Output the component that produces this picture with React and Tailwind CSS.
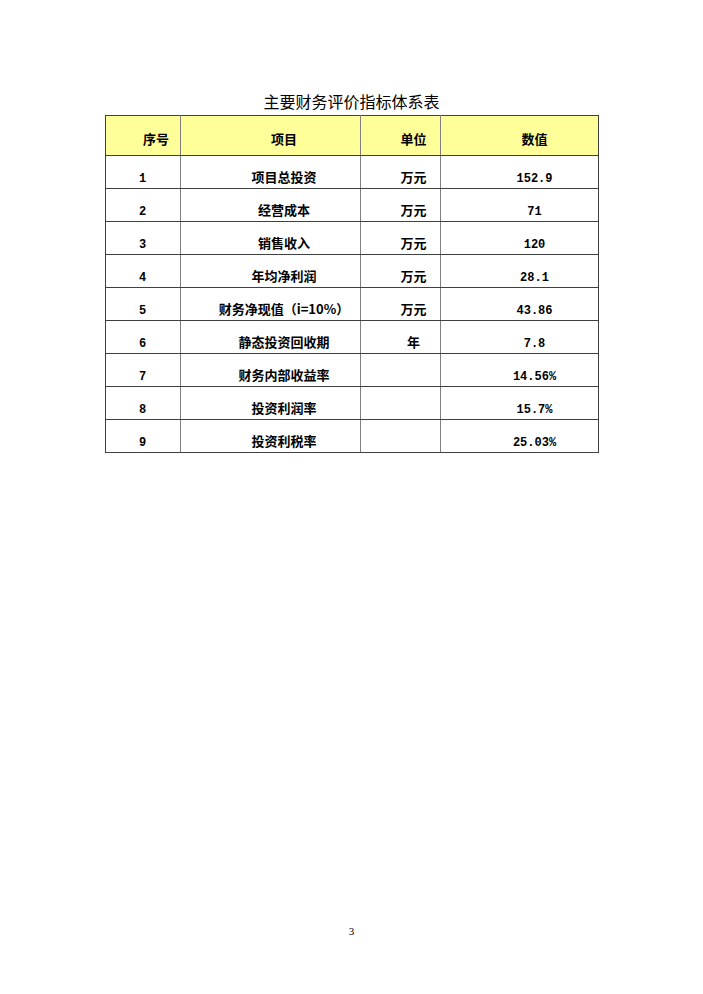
import React from 'react';

const rows = [
  { no: '1', name: '项目总投资', unit: '万元', value: '152.9' },
  { no: '2', name: '经营成本', unit: '万元', value: '71' },
  { no: '3', name: '销售收入', unit: '万元', value: '120' },
  { no: '4', name: '年均净利润', unit: '万元', value: '28.1' },
  { no: '5', name: '财务净现值（i=10%）', unit: '万元', value: '43.86' },
  { no: '6', name: '静态投资回收期', unit: '年', value: '7.8' },
  { no: '7', name: '财务内部收益率', unit: '', value: '14.56%' },
  { no: '8', name: '投资利润率', unit: '', value: '15.7%' },
  { no: '9', name: '投资利税率', unit: '', value: '25.03%' },
];

const cjk = { fontFamily: '"Noto Sans CJK SC", "Liberation Sans", sans-serif' };
const mono = { fontFamily: '"Liberation Mono", monospace' };

const App = () => {
  return (
    <div className="w-[703px] h-[994px] bg-white flex flex-col text-black" style={cjk}>
      <div className="pt-[91px] h-[20px] box-content text-center text-[16px] leading-[20px]">
        主要财务评价指标体系表
      </div>

      <div className="pl-[105px] mt-[4px]">
        <table className="table-fixed border-collapse w-[493px] font-bold text-[13px]">
          <colgroup>
            <col className="w-[75px]" />
            <col className="w-[180px]" />
            <col className="w-[80px]" />
            <col className="w-[158px]" />
          </colgroup>
          <thead>
            <tr className="bg-[#ffff99] h-[40px]">
              <th className="border border-[#404040] border-r-[#808080] pl-[37px] pt-[7px] text-left font-bold">序号</th>
              <th className="border border-[#404040] border-x-[#808080] pl-[27px] pt-[7px] text-center font-bold">项目</th>
              <th className="border border-[#404040] border-x-[#808080] pl-[26px] pt-[7px] text-center font-bold">单位</th>
              <th className="border border-[#404040] border-l-[#808080] pl-[30px] pt-[7px] text-center font-bold">数值</th>
            </tr>
          </thead>
          <tbody>
            {rows.map((row) => (
              <tr key={row.no} className="h-[33px]">
                <td className="border border-[#404040] border-r-[#808080] pl-[33px] pt-[10px] text-left">
                  <span style={mono} className="text-[12px]">{row.no}</span>
                </td>
                <td className="border border-[#404040] border-x-[#808080] pl-[27px] pt-[10px] text-center whitespace-nowrap">
                  {row.name}
                </td>
                <td className="border border-[#404040] border-x-[#808080] pl-[26px] pt-[10px] text-center">
                  {row.unit}
                </td>
                <td className="border border-[#404040] border-l-[#808080] pl-[30px] pt-[10px] text-center">
                  <span style={mono} className="text-[12px]">{row.value}</span>
                </td>
              </tr>
            ))}
          </tbody>
        </table>
      </div>

      <div className="flex-1" />

      <div className="text-center text-[11px] leading-[16px] mb-[55px]" style={{ fontFamily: '"Liberation Serif", serif' }}>
        3
      </div>
    </div>
  );
};

export default App;
